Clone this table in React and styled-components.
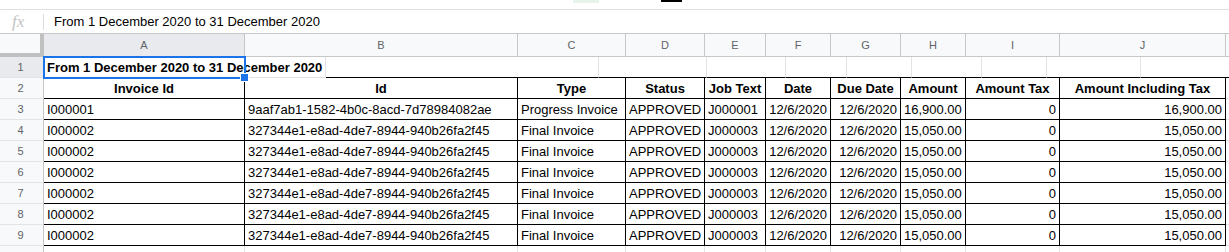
import React from 'react';
import styled, { createGlobalStyle } from 'styled-components';

const Global = createGlobalStyle`
  html, body { margin: 0; padding: 0; background: #fff; }
  body { font-family: "Liberation Sans", Arial, sans-serif; overflow: hidden; width: 1229px; height: 252px; }
`;

const COLS = [
  { key: 'A', w: 201 },
  { key: 'B', w: 273 },
  { key: 'C', w: 108 },
  { key: 'D', w: 79 },
  { key: 'E', w: 61 },
  { key: 'F', w: 65 },
  { key: 'G', w: 70 },
  { key: 'H', w: 65 },
  { key: 'I', w: 94 },
  { key: 'J', w: 166 },
  { key: '', w: 100 },
];

const ALIGN = ['left', 'left', 'left', 'left', 'left', 'right', 'right', 'left', 'right', 'right'];

const HEADERS = ['Invoice Id', 'Id', 'Type', 'Status', 'Job Text', 'Date', 'Due Date', 'Amount', 'Amount Tax', 'Amount Including Tax'];

const FIRST = ['I000001', '9aaf7ab1-1582-4b0c-8acd-7d78984082ae', 'Progress Invoice', 'APPROVED', 'J000001', '12/6/2020', '12/6/2020', '16,900.00', '0', '16,900.00'];
const OTHER = ['I000002', '327344e1-e8ad-4de7-8944-940b26fa2f45', 'Final Invoice', 'APPROVED', 'J000003', '12/6/2020', '12/6/2020', '15,050.00', '0', '15,050.00'];

const TITLE = 'From 1 December 2020 to 31 December 2020';

const Page = styled.div`
  display: flex;
  flex-direction: column;
  width: 1229px;
  height: 252px;
  overflow: hidden;
`;

const TopStrip = styled.div`
  display: flex;
  align-items: flex-start;
  flex: 0 0 9px;
`;

const GreenChip = styled.div`
  margin-left: 573px;
  width: 26px;
  height: 3px;
  background: #e6f4ea;
`;

const DarkBar = styled.div`
  margin-left: 62px;
  width: 21px;
  height: 2px;
  background: #000;
`;

const FormulaBar = styled.div`
  box-sizing: border-box;
  display: flex;
  align-items: center;
  flex: 0 0 24px;
  border-top: 1px solid #e0e0e0;
`;

const FxIcon = styled.div`
  box-sizing: border-box;
  width: 44px;
  height: 16px;
  padding-left: 12px;
  display: flex;
  align-items: center;
  font-family: "Liberation Serif", "Times New Roman", serif;
  font-style: italic;
  font-size: 17px;
  color: #c4c4c4;
  line-height: 20px;
  border-right: 1px solid #dadce0;
`;

const FormulaText = styled.div`
  padding-left: 10px;
  font-size: 13px;
  color: #000;
  line-height: 20px;
`;

const Sheet = styled.div`
  display: flex;
  flex-direction: column;
  border-top: 1px solid #c7c7c7;
`;

const Row = styled.div`
  display: flex;
  flex-wrap: nowrap;
`;

const Corner = styled.div`
  box-sizing: border-box;
  flex: 0 0 44px;
  height: 23px;
  background: #f8f9fa;
  border-right: 4px solid #c0c0c0;
  border-bottom: 4px solid #c0c0c0;
`;

const ColHead = styled.div`
  box-sizing: border-box;
  flex: 0 0 ${p => p.$w}px;
  height: 23px;
  background: ${p => (p.$sel ? '#e8eaed' : '#f8f9fa')};
  border-right: 1px solid #c7c7c7;
  border-bottom: 1px solid #c7c7c7;
  color: #5f6368;
  font-size: 11px;
  line-height: 22px;
  text-align: center;
`;

const RowHead = styled.div`
  box-sizing: border-box;
  flex: 0 0 44px;
  height: 21px;
  background: ${p => (p.$sel ? '#e8eaed' : '#f8f9fa')};
  border-right: 1px solid #c7c7c7;
  border-bottom: 1px solid #e2e3e3;
  color: #5f6368;
  font-size: 11px;
  line-height: 20px;
  text-align: center;
  padding-right: 2px;
`;

const Cell = styled.div`
  box-sizing: border-box;
  position: relative;
  flex: 0 0 ${p => p.$w}px;
  height: 21px;
  padding: 1px 3px 0;
  line-height: 19px;
  font-size: 13px;
  color: #000;
  white-space: nowrap;
  overflow: ${p => (p.$spill ? 'visible' : 'hidden')};
  text-align: ${p => p.$align};
  font-weight: ${p => (p.$bold ? 700 : 400)};
  border-right: 1px solid ${p => (p.$darkR ? '#000' : '#e2e3e3')};
  border-bottom: 1px solid ${p => (p.$darkB ? '#000' : '#e2e3e3')};
`;

const Selection = styled.div`
  position: absolute;
  left: -1px;
  top: -1px;
  width: 203px;
  height: 23px;
  box-sizing: border-box;
  border: 2px solid #1a73e8;
  pointer-events: none;
  z-index: 2;
`;

const Handle = styled.div`
  position: absolute;
  right: -5px;
  bottom: -5px;
  width: 7px;
  height: 7px;
  background: #1a73e8;
  border: 1px solid #fff;
`;

function buildRows() {
  const rows = [];
  rows.push({
    label: '1',
    sel: true,
    cells: COLS.map((c, i) => ({
      text: i === 0 ? TITLE : '',
      bold: true,
      align: 'left',
      darkB: i > 0 && i < 10,
      spill: i === 0,
      sel: i === 0,
    })),
  });
  rows.push({
    label: '2',
    cells: COLS.map((c, i) => ({
      text: i < 10 ? HEADERS[i] : '',
      bold: true,
      align: 'center',
      darkR: i < 10,
      darkB: i < 10,
    })),
  });
  for (let r = 0; r < 7; r++) {
    const src = r === 0 ? FIRST : OTHER;
    rows.push({
      label: String(r + 3),
      cells: COLS.map((c, i) => ({
        text: i < 10 ? src[i] : '',
        align: i < 10 ? ALIGN[i] : 'left',
        darkR: i < 10,
        darkB: i < 10,
      })),
    });
  }
  rows.push({ label: '', cells: COLS.map(() => ({ text: '', align: 'left' })) });
  return rows;
}

const ROWS = buildRows();

export default function App() {
  return (
    <>
      <Global />
      <Page>
        <TopStrip>
          <GreenChip />
          <DarkBar />
        </TopStrip>
        <FormulaBar>
          <FxIcon>fx</FxIcon>
          <FormulaText>{TITLE}</FormulaText>
        </FormulaBar>
        <Sheet>
          <Row>
            <Corner />
            {COLS.map((c, i) => (
              <ColHead key={i} $w={c.w} $sel={i === 0}>
                {c.key}
              </ColHead>
            ))}
          </Row>
          {ROWS.map((row, r) => (
            <Row key={r}>
              <RowHead $sel={row.sel}>{row.label}</RowHead>
              {row.cells.map((cell, i) => (
                <Cell
                  key={i}
                  $w={COLS[i].w}
                  $align={cell.align}
                  $bold={cell.bold}
                  $darkR={cell.darkR}
                  $darkB={cell.darkB}
                  $spill={cell.spill}
                >
                  {cell.text}
                  {cell.sel && (
                    <Selection>
                      <Handle />
                    </Selection>
                  )}
                </Cell>
              ))}
            </Row>
          ))}
        </Sheet>
      </Page>
    </>
  );
}
